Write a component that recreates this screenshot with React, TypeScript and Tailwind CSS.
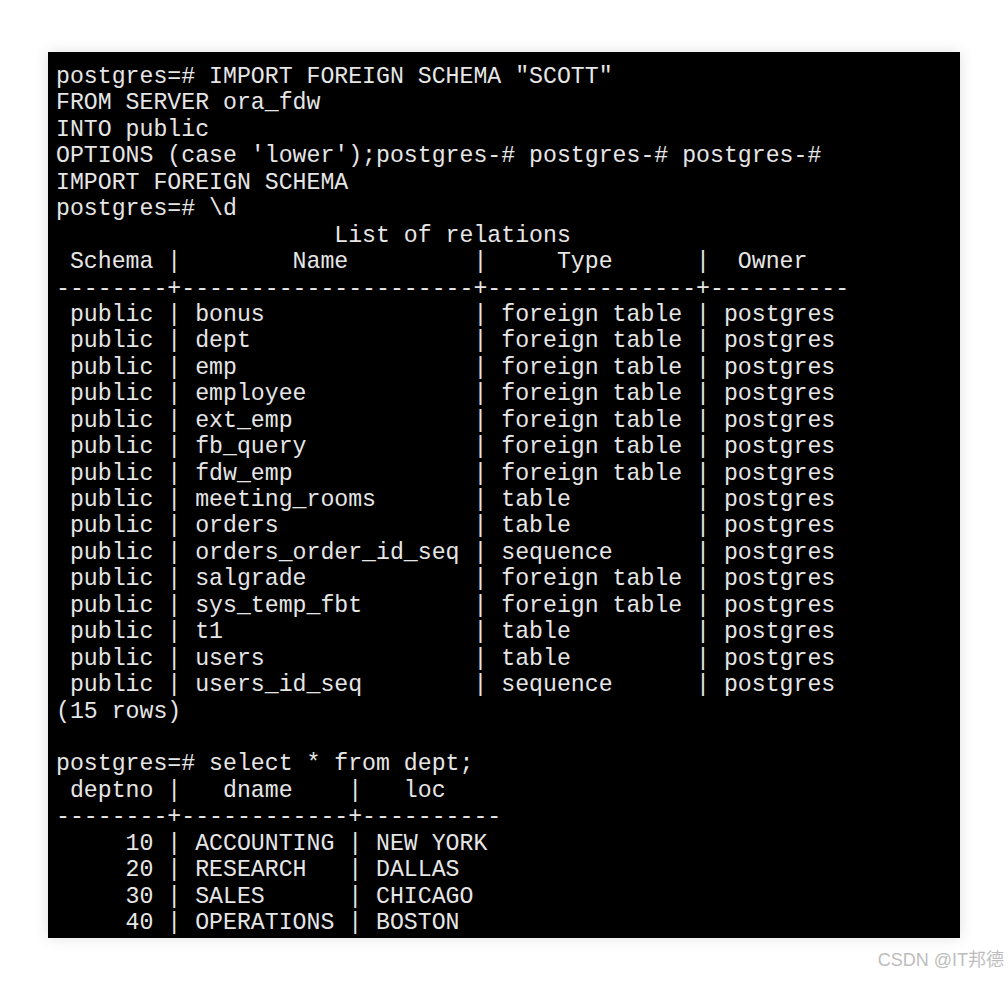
const lines = [
  'postgres=# IMPORT FOREIGN SCHEMA "SCOTT"',
  'FROM SERVER ora_fdw',
  'INTO public',
  "OPTIONS (case 'lower');postgres-# postgres-# postgres-#",
  'IMPORT FOREIGN SCHEMA',
  'postgres=# \\d',
  '                    List of relations',
  ' Schema |        Name         |     Type      |  Owner',
  '--------+---------------------+---------------+----------',
  ' public | bonus               | foreign table | postgres',
  ' public | dept                | foreign table | postgres',
  ' public | emp                 | foreign table | postgres',
  ' public | employee            | foreign table | postgres',
  ' public | ext_emp             | foreign table | postgres',
  ' public | fb_query            | foreign table | postgres',
  ' public | fdw_emp             | foreign table | postgres',
  ' public | meeting_rooms       | table         | postgres',
  ' public | orders              | table         | postgres',
  ' public | orders_order_id_seq | sequence      | postgres',
  ' public | salgrade            | foreign table | postgres',
  ' public | sys_temp_fbt        | foreign table | postgres',
  ' public | t1                  | table         | postgres',
  ' public | users               | table         | postgres',
  ' public | users_id_seq        | sequence      | postgres',
  '(15 rows)',
  '',
  'postgres=# select * from dept;',
  ' deptno |   dname    |   loc',
  '--------+------------+----------',
  '     10 | ACCOUNTING | NEW YORK',
  '     20 | RESEARCH   | DALLAS',
  '     30 | SALES      | CHICAGO',
  '     40 | OPERATIONS | BOSTON',
];

export default function App() {
  return (
    <div className="min-h-[986px] w-[1008px] bg-white pt-[52px]">
      <div className="ml-[48px] h-[886px] w-[912px] overflow-hidden bg-black pl-[8px] pt-[12px] shadow-[0_0_14px_rgba(0,0,0,0.12)]">
        <pre className="font-['Liberation_Mono','Courier_New',monospace] text-[23.2px] leading-[26.45px] text-[#e6e6e6]">
          {lines.map((l, i) => (
            <div key={i} className="h-[26.45px] whitespace-pre">
              {l}
            </div>
          ))}
        </pre>
      </div>
      <div className="mt-[11px] flex justify-end pr-[4px]">
        <span className="font-['Liberation_Sans','Noto_Sans_CJK_SC',sans-serif] text-[18px] leading-[22px] text-[#bdbdbd]">
          CSDN @IT邦德
        </span>
      </div>
    </div>
  );
}
